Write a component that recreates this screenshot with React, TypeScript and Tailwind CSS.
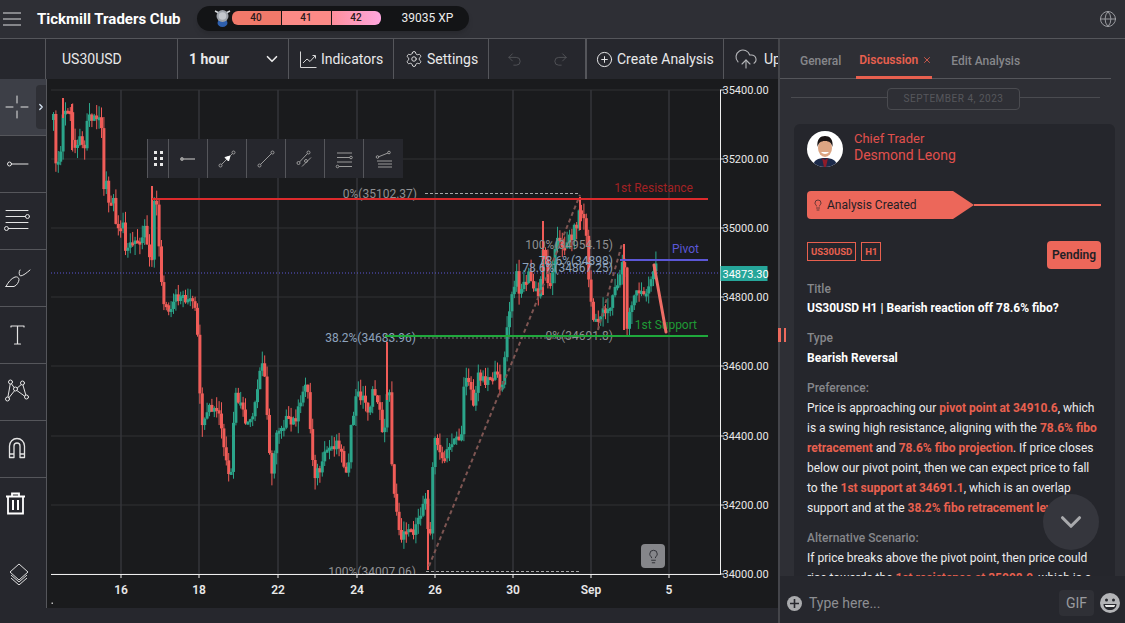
import { ChevronDown, ChevronRight, CirclePlus, CloudUpload, Globe, Lightbulb, Redo2, Settings, Undo2, X } from 'lucide-react';

// price path in page pixels: [x, close y]
const PATH: [number, number][] = [
  [52, 120], [53, 138], [55, 167], [58, 167], [60, 140], [62, 110], [65, 112], [68, 107], [70, 130], [72, 150], [75, 145], [78, 128], [80, 150],
  [83, 145], [85, 118], [87, 115], [92, 116], [97, 118], [100, 125], [102, 190], [105, 178], [108, 213], [112, 200], [115, 230], [118, 237],
  [122, 222], [123, 245], [128, 245], [133, 245], [140, 235], [143, 225], [147, 250], [150, 268], [152, 200], [155, 205], [158, 250], [162, 307],
  [165, 305], [168, 320], [173, 300], [180, 295], [187, 300], [193, 305], [197, 350], [198, 393], [200, 420], [203, 425], [208, 410], [217, 412],
  [220, 430], [227, 480], [230, 475], [233, 395], [238, 402], [243, 420], [250, 425], [255, 400], [258, 372], [262, 362], [265, 400], [270, 482],
  [275, 430], [280, 425], [285, 420], [290, 425], [295, 415], [300, 405], [303, 380], [305, 380], [307, 400], [310, 447], [313, 473], [320, 470],
  [325, 450], [330, 447], [337, 440], [342, 463], [347, 470], [350, 425], [355, 395], [360, 395], [367, 410], [372, 392], [377, 400], [380, 430],
  [385, 420], [387, 346], [389, 440], [392, 485], [397, 520], [398, 545], [403, 525], [410, 530], [415, 530], [420, 510], [425, 490], [428, 562],
  [430, 490], [433, 440], [437, 440], [440, 465], [447, 450], [453, 435], [460, 440], [463, 370], [468, 380], [473, 410], [477, 372], [483, 380],
  [490, 375], [497, 380], [500, 390], [503, 360], [505, 337], [508, 310], [515, 275], [518, 290], [522, 285], [527, 275], [533, 290], [538, 298],
  [543, 225], [545, 290], [550, 275], [555, 240], [563, 245], [570, 235], [575, 225], [578, 210], [582, 215], [585, 240], [588, 290], [592, 320],
  [595, 325], [600, 310], [608, 308], [613, 290], [618, 280], [623, 250], [624, 330], [627, 330], [628, 310], [633, 295], [638, 295], [643, 290],
  [648, 285], [652, 268], [655, 265],
];

const noise = (n: number) => {
  const v = Math.sin(n * 12.9898) * 43758.5453;
  return v - Math.floor(v);
};

function closeAt(x: number) {
  for (let i = 1; i < PATH.length; i++) {
    const [x0, y0] = PATH[i - 1];
    const [x1, y1] = PATH[i];
    if (x <= x1) return y0 + ((y1 - y0) * (x - x0)) / (x1 - x0);
  }
  return PATH[PATH.length - 1][1];
}

const CANDLES = (() => {
  const out: { x: number; top: number; bottom: number; wickTop: number; wickBottom: number; up: boolean }[] = [];
  let prev = PATH[0][1];
  let i = 0;
  for (let x = 52; x <= 655; x += 2.4) {
    const close = closeAt(x) + (noise(i) - 0.5) * 12;
    const top = Math.min(prev, close);
    const bottom = Math.max(prev, close);
    out.push({
      x,
      top,
      bottom: Math.max(bottom, top + 3),
      wickTop: top - noise(i + 300) * 12,
      wickBottom: bottom + noise(i + 700) * 12,
      up: close < prev,
    });
    prev = close;
    i++;
  }
  return out;
})();

const SPIKES = [
  [387, 342, 400], [543, 221, 295], [428, 490, 570], [624, 244, 330], [152, 186, 260], [580, 197, 230], [63, 98, 118], [72, 104, 150],
];

const PRICES = [
  ['35400.00', 90], ['35200.00', 159], ['35000.00', 228], ['34800.00', 297], ['34600.00', 366], ['34400.00', 436], ['34200.00', 505], ['34000.00', 574],
] as const;
const DATES = [['16', 121], ['18', 199], ['22', 278], ['24', 357], ['26', 435], ['30', 513], ['Sep', 591], ['5', 669]] as const;

function Chart() {
  return (
    <svg viewBox="47 79 731 529" className="block w-[731px] h-[529px]" style={{ fontFamily: 'Roboto, sans-serif' }}>
      <defs><clipPath id="plot"><rect x="47" y="79" width="673" height="495" /></clipPath></defs>
      {PRICES.map(([, y]) => <line key={y} x1="51" x2="720" y1={y} y2={y} stroke="#2a2b2d" strokeWidth="1.5" />)}
      {DATES.map(([, x]) => <line key={x} x1={x} x2={x} y1="90" y2="574" stroke="#35363a" strokeWidth="1.5" />)}

      <line x1="51" x2="720" y1="273" y2="273" stroke="#5b57d6" strokeDasharray="1 2" />

      {CANDLES.map((c, i) => {
        const color = c.up ? '#2ba58a' : '#f05c58';
        return (
          <g key={i}>
            <line x1={c.x + 1.5} x2={c.x + 1.5} y1={c.wickTop} y2={c.wickBottom} stroke={color} strokeWidth="1" />
            <rect x={c.x} y={c.top} width="3" height={c.bottom - c.top} fill={color} />
          </g>
        );
      })}
      {SPIKES.map(([x, a, b]) => <rect key={x} x={x - 1} y={a} width="2" height={b - a} fill="#f05c58" />)}

      {/* fibo drawings */}
      <line x1="429" y1="566" x2="580" y2="195" stroke="#7d5552" strokeWidth="2" strokeDasharray="4 3" />
      <line x1="598" y1="330" x2="622" y2="244" stroke="#7d5552" strokeWidth="2" strokeDasharray="4 3" />
      <line x1="425" x2="580" y1="193.5" y2="193.5" stroke="#a8a8a8" strokeDasharray="3 2" />
      <line x1="426" x2="580" y1="571.5" y2="571.5" stroke="#a8a8a8" strokeDasharray="3 2" />
      <line x1="420" x2="580" y1="338" y2="338" stroke="#777" strokeDasharray="2 2" />
      <g fontSize="12" fill="#8f9092" clipPath="url(#plot)">
        <text x="417" y="197.5" textAnchor="end">0%(35102.37)</text>
        <text x="416" y="576" textAnchor="end">100%(34007.06)</text>
        <text x="613" y="248.5" textAnchor="end">100%(34954.15)</text>
        <text x="613" y="339.5" textAnchor="end">0%(34691.8)</text>
      </g>
      <g fontSize="12" fill="#8ea3bd">
        <text x="416" y="342" textAnchor="end">38.2%(34683.96)</text>
        <text x="613" y="265" textAnchor="end">78.6%(34898)</text>
        <text x="613" y="271.5" textAnchor="end">78.6%(34867.25)</text>
      </g>

      {/* levels */}
      <line x1="152" x2="708" y1="199" y2="199" stroke="#dc2a2c" strokeWidth="2" />
      <line x1="620" x2="708" y1="260" y2="260" stroke="#5b57d6" strokeWidth="2" />
      <line x1="385" x2="708" y1="336" y2="336" stroke="#1fa83c" strokeWidth="2" />
      <text x="693" y="192" textAnchor="end" fontSize="12" fill="#a32224">1st Resistance</text>
      <text x="699" y="253" textAnchor="end" fontSize="12" fill="#5b57d6">Pivot</text>
      <text x="697" y="329" textAnchor="end" fontSize="12" fill="#1f9a36">1st Support</text>
      <polyline points="654,265 666,332" fill="none" stroke="#ee6d66" strokeWidth="3" strokeLinecap="round" />

      {/* axes */}
      <line x1="720.5" x2="720.5" y1="90" y2="574.5" stroke="#eee" />
      <line x1="51" x2="721" y1="574.5" y2="574.5" stroke="#eee" />
      {PRICES.map(([label, y]) => (
        <g key={label}>
          <line x1="720" x2="724" y1={y} y2={y} stroke="#eee" />
          <text x="722" dx="0.5" y={y + 4} fontSize="11" fill="#e8e8e8">{label}</text>
        </g>
      ))}
      <line x1="720" x2="724" y1="273" y2="273" stroke="#eee" />
      <rect x="720.5" y="266" width="47" height="15" fill="#26a69a" />
      <text x="722.500" y="277.5" fontSize="11" fill="#fff">34873.30</text>
      {DATES.map(([label, x]) => (
        <g key={label}>
          <line x1={x} x2={x} y1="574" y2="578" stroke="#eee" />
          <text x={x} y="594" textAnchor="middle" fontSize="12" fontWeight="600" fill="#e8e8e8">{label}</text>
        </g>
      ))}
      <rect x="51.5" y="602.5" width="1.5" height="1.5" fill="#bbb" />
    </svg>
  );
}

function RailIcon({ children }: { children: React.ReactNode }) {
  return (
    <svg width="34" height="34" viewBox="0 0 34 34" fill="none" stroke="#e4e4e4" strokeWidth="1" strokeLinecap="round" strokeLinejoin="round">
      {children}
    </svg>
  );
}

const RAIL = [
  <RailIcon key="cross"><path d="M6 17h7M21 17h7M17 6v7M17 21v7" /></RailIcon>,
  <RailIcon key="ray"><circle cx="9.5" cy="17" r="2" /><path d="M11.5 17H28" /></RailIcon>,
  <RailIcon key="fib"><path d="M6 6.500h22M6 12.500h19.500M6 18.500h22M8.500 24.500h19.500" /><circle cx="27.500" cy="12.500" r="2" /><circle cx="6.500" cy="24.500" r="2" /></RailIcon>,
  <RailIcon key="brush"><path d="M6 25.500h8c3-1 5-5 5-7 0-2-2-3-4-2.500-4 1.500-7 5.500-9 9.500zM20 9c-1.500 2-1 5 .5 6 3-.5 6-3 9.500-6" /></RailIcon>,
  <RailIcon key="text"><path d="M11 9V8h13v1M17.500 8v18M14.500 26h6" strokeWidth="1.200" /></RailIcon>,
  <RailIcon key="nodes"><path d="M10.500 7.500l-3 17M10.500 7.500l5 7M22.500 8.500l-7 6M15.500 14.500l-8 10M15.500 14.500l11 8M22.500 8.500l4 14" /><g fill="#26272d"><circle cx="10.500" cy="7" r="2" /><circle cx="22.500" cy="8" r="2" /><circle cx="15.500" cy="14" r="2" /><circle cx="7.500" cy="24" r="2" /><circle cx="26.500" cy="22" r="2" /></g></RailIcon>,
  <RailIcon key="magnet"><path d="M9.500 25.500V14a7.500 7.500 0 0115 0v11.500h-4.500V14a3 3 0 00-6 0v11.500zM9.500 22h4.500M20 22h4.500" strokeWidth="1.300" /></RailIcon>,
];

function ToolIcon({ children }: { children: React.ReactNode }) {
  return (
    <svg width="22" height="22" viewBox="0 0 22 22" fill="none" stroke="#9a9a9a" strokeWidth="1">
      {children}
    </svg>
  );
}

const DRAW_TOOLS = [
  <ToolIcon key="a"><circle cx="5" cy="11" r="1.500" fill="#9a9a9a" /><path d="M6 11h12" strokeWidth="1.500" /></ToolIcon>,
  <ToolIcon key="b"><circle cx="4.500" cy="17.500" r="1.500" /><circle cx="17.500" cy="4.500" r="1.500" /><path d="M5.500 16.500l11-11" /><path d="M9 9.500l5-1.500-1.500 5z" fill="#fff" stroke="#fff" /></ToolIcon>,
  <ToolIcon key="c"><circle cx="4.500" cy="17.500" r="1.500" /><circle cx="17.500" cy="4.500" r="1.500" /><path d="M5.500 16.500l11-11" /></ToolIcon>,
  <ToolIcon key="d"><circle cx="4.500" cy="15" r="1.500" /><circle cx="14.500" cy="4.500" r="1.500" /><path d="M5.500 14l8-8.500M8 18.500l9-9" /><circle cx="12" cy="13" r="1.500" /></ToolIcon>,
  <ToolIcon key="e"><path d="M4 5h15M4 9.500h13M4 14h15M6 18.500h13" /><circle cx="18" cy="9.500" r="1.300" /><circle cx="4.500" cy="18.500" r="1.300" /></ToolIcon>,
  <ToolIcon key="f"><path d="M5 9l10-4" /><circle cx="16" cy="4.500" r="1.300" /><circle cx="4.500" cy="9" r="1.300" /><path d="M4 13h15M5 16h14M5 19h14" strokeWidth="1.200" /></ToolIcon>,
];

function Divider() {
  return <div className="w-px self-stretch bg-[#55565b]" />;
}

function Hl({ children }: { children: React.ReactNode }) {
  return <span className="font-bold text-[#e8604f]">{children}</span>;
}

function Label({ className, children }: { className: string; children: React.ReactNode }) {
  return <p className={`${className} text-xs leading-4 font-medium text-[#86878b]`}>{children}</p>;
}

export default function App() {
  return (
    <div className="w-[1125px] h-[623px] overflow-hidden flex flex-col bg-[#2e2f35] text-white font-['Roboto',sans-serif]">
      {/* header */}
      <header className="h-[39px] shrink-0 flex items-center border-b border-[#55565b]">
        <div className="ml-[3px] w-[18px] flex flex-col gap-[4px]">
          <span className="h-[2px] bg-[#85868a]" />
          <span className="h-[2px] bg-[#85868a]" />
          <span className="h-[2px] bg-[#85868a]" />
        </div>
        <span className="ml-4 text-[15px] font-bold">Tickmill Traders Club</span>
        <div className="ml-4 w-[272px] h-[25px] -mt-[2px] rounded-full bg-[#131416] shadow-md flex items-center pl-4">
          <svg width="19" height="20" viewBox="0 0 19 20">
            <ellipse cx="9.500" cy="15" rx="5" ry="4" fill="#2d5fae" />
            <circle cx="9.500" cy="8" r="6" fill="#9ea3ab" />
            <circle cx="9.500" cy="8" r="3.800" fill="#c4c8ce" />
            <path d="M2 3l3 1.500M17 3l-3 1.500" stroke="#d5d8dc" strokeWidth="1.500" />
          </svg>
          <div className="h-[14px] w-[149px] flex gap-[1px] rounded-md overflow-hidden text-[10px] leading-[14px] font-medium text-[#2b1a1a] text-center">
            <span className="flex-1 bg-[#f1796a]">40</span>
            <span className="flex-1 bg-[#fb8a86]">41</span>
            <span className="flex-1 bg-[linear-gradient(90deg,#fe8f9c,#ffa7de)]">42</span>
          </div>
          <span className="ml-[21px] text-xs text-[#ececec]">39035 XP</span>
        </div>
        <Globe size={18} strokeWidth={1.2} className="ml-auto mr-[8px] text-[#a5a6aa]" />
      </header>

      <div className="flex-1 min-h-0 flex">
        {/* left side */}
        <div className="w-[778px] shrink-0 flex flex-col bg-[#26272d]">
          <div className="h-10 shrink-0 flex items-stretch text-sm text-[#e9e9ea]">
            <div className="w-[46px] border-r border-[#55565b]" />
            <div className="w-[131px] flex items-center pl-4">US30USD</div>
            <Divider />
            <div className="w-[110px] flex items-center pl-[11px] font-bold">
              1 hour
              <ChevronDown size={18} strokeWidth={2.2} className="ml-auto mr-[7px]" />
            </div>
            <Divider />
            <div className="w-[104px] flex items-center pl-[11px] gap-[4px]">
              <svg width="17" height="17" viewBox="0 0 17 17" fill="none" stroke="#d5d5d5" strokeWidth="1">
                <path d="M.5 .5v16h16" />
                <path d="M3 12l4-4 3 2.500 5-5.500M12.500 4.500H15.500V7.500" />
              </svg>
              Indicators
            </div>
            <Divider />
            <div className="w-[94px] flex items-center pl-[11px] gap-[4px]">
              <Settings size={18} strokeWidth={1.2} />
              Settings
            </div>
            <Divider />
            <div className="w-[96px] flex items-center pl-[17px] gap-[29px] text-[#56575c]">
              <Undo2 size={17} strokeWidth={1.2} />
              <Redo2 size={17} strokeWidth={1.2} />
            </div>
            <div className="w-[2px] bg-[#55565b]" />
            <div className="w-[136px] flex items-center pl-[9px] gap-[4px]">
              <CirclePlus size={17} strokeWidth={1.4} />
              Create Analysis
            </div>
            <Divider />
            <div className="flex-1 min-w-0 overflow-hidden flex items-center pl-[10px] gap-[6px]">
              <CloudUpload size={24} strokeWidth={1.1} className="shrink-0 text-[#b5b6b9]" />
              <span>Upload</span>
            </div>
          </div>

          <div className="flex h-[529px] shrink-0">
            {/* tool rail */}
            <aside className="relative w-[47px] shrink-0 border-r border-[#55565b] flex flex-col bg-[#26272d]">
              {RAIL.map((icon, i) => (
                <div key={i} className={`h-[57px] shrink-0 flex items-center justify-center pr-[12px] border-b border-[#55565b] ${i === 0 ? 'bg-[#3d3f47]' : ''}`}>
                  {icon}
                </div>
              ))}
              <div className="h-[50px] shrink-0 flex items-center pl-[5px]">
                <svg width="21" height="23" viewBox="0 0 21 23" fill="none" stroke="#fff" strokeWidth="1.800">
                  <path d="M1 4.500h19M7 4V1.500h7V4M3 4.500V21.500h15V4.500" />
                  <path d="M8 8v10M13 8v10" strokeWidth="2" />
                </svg>
              </div>
              <div className="flex items-center pl-[9px] pt-[35px]">
                <svg width="20" height="22" viewBox="0 0 20 22" fill="none" stroke="#dedede" strokeWidth="1">
                  <path d="M10 1l9 8-9 8-9-8zM2 12l8 7 8-7M2 15l8 7 8-7" />
                </svg>
              </div>
              <div className="absolute left-[36px] top-[6px] w-[10px] h-[44px] rounded-l bg-[#2e2f35] flex items-center justify-center">
                <ChevronRight size={10} strokeWidth={3} className="text-[#d8e6f5]" />
              </div>
            </aside>

            <div className="relative w-[731px] shrink-0 bg-[#1a1b1d]">
              <Chart />
              {/* floating drawing tools */}
              <div className="absolute left-[100px] top-[60px] h-[39px] flex bg-[#26272d]">
                <div className="w-[22px] grid grid-cols-2 content-center justify-center gap-x-[3px] gap-y-[3px] px-[6px] border-x border-[#55565b]">
                  {[0, 1, 2, 3, 4, 5].map(i => <span key={i} className="w-[3px] h-[3px] bg-[#e8e8e8]" />)}
                </div>
                {DRAW_TOOLS.map((icon, i) => (
                  <div key={i} className="w-[39px] flex items-center justify-center border-r border-[#55565b] last:border-r-0">{icon}</div>
                ))}
              </div>
              <div className="absolute left-[594px] top-[465px] w-6 h-6 rounded-sm bg-[#85868a] flex items-center justify-center">
                <Lightbulb size={15} strokeWidth={1.4} className="text-[#26272d]" />
              </div>
            </div>
          </div>
          <div className="flex-1" />
        </div>

        {/* right panel */}
        <div className="relative flex-1 min-w-0 flex flex-col border-l-2 border-[#44454a]">
          <div className="absolute -left-[2px] top-[289px] w-[8px] h-[14px] flex justify-between">
            <span className="w-[3px] bg-[#ee6a5d]" />
            <span className="w-[2px] bg-[#ee6a5d]" />
          </div>
          <div className="h-10 shrink-0 mr-[14px] flex items-stretch pl-[20px] border-b border-[#55565b] text-xs font-medium text-[#86878b]">
            <span className="mt-[14px]">General</span>
            <div className="ml-[15px] -mb-px h-10 pl-[3px] w-[76px] pt-[13px] flex items-start justify-between border-b-[3px] border-[#e8604f] text-[#e8604f] font-semibold">
              Discussion
              <X size={10} strokeWidth={2} className="mt-[3px]" />
            </div>
            <span className="ml-[19px] mt-[14px]">Edit Analysis</span>
          </div>

          <div className="h-[45px] shrink-0 flex items-start pt-[9px] pl-[11px] pr-[25px]">
            <div className="w-[96px] h-px mt-[9px] bg-[#4a4b50]" />
            <span className="h-[22px] w-[133px] rounded border border-[#4a4b50] text-center text-[10px] leading-5 tracking-wider text-[#56575c]">SEPTEMBER 4, 2023</span>
            <div className="flex-1 h-px mt-[9px] bg-[#4a4b50]" />
          </div>

          <div className="flex-1 min-h-0 ml-[14px] mr-[10px] overflow-hidden rounded-t-md bg-[#25262c] pl-[13px] pr-[14px] pt-[7px]">
            <div className="flex items-start">
              <svg width="36" height="36" viewBox="0 0 36 36" className="shrink-0">
                <defs><clipPath id="av"><circle cx="18" cy="18" r="18" /></clipPath></defs>
                <g clipPath="url(#av)">
                  <rect width="36" height="36" fill="#fff" />
                  <path d="M6 36c0-7 5-9 12-9s12 2 12 9z" fill="#1c2a4a" />
                  <path d="M15 27l3 2 3-2-2 9h-2z" fill="#8e1c2a" />
                  <ellipse cx="18" cy="17" rx="7" ry="9" fill="#dca583" />
                  <path d="M10.500 16c-1-8 3-11 7.500-11s8.500 3 7.500 11c-1-4-3-6-7.500-6s-6.500 2-7.500 6z" fill="#1a1414" />
                  <path d="M14 21c2 2.500 6 2.500 8 0z" fill="#fff" />
                </g>
              </svg>
              <div className="ml-[11px] -mt-px text-sm leading-[17px] text-[#e0504c]">
                <p className="text-[13px]">Chief Trader</p>
                <p>Desmond Leong</p>
              </div>
            </div>

            <div className="mt-[24px] flex items-center">
              <div className="w-[167px] h-[28px] shrink-0 rounded-l bg-[#ec675a] [clip-path:polygon(0_0,146px_0,167px_14px,146px_28px,0_28px)] flex items-center pl-[5px] gap-[3px] text-xs text-[#1f2025]">
                <Lightbulb size={12} strokeWidth={1.3} />
                Analysis Created
              </div>
              <div className="flex-1 h-[2px] bg-[#ec675a]" />
            </div>

            <div className="mt-[22px] h-[28px] flex items-start">
              <span className="mt-px h-[19px] px-[3px] border border-[#e8604f] text-[9.5px] leading-[17px] font-bold text-[#e8604f]">US30USD</span>
              <span className="ml-[5px] mt-px h-[19px] px-[3px] border border-[#e8604f] text-[9.5px] leading-[17px] font-bold text-[#e8604f]">H1</span>
              <span className="ml-auto h-[28px] w-[54px] rounded bg-[#ec675a] text-center text-xs leading-[28px] font-semibold text-[#1f2025]">Pending</span>
            </div>

            <Label className="mt-[12px]">Title</Label>
            <p className="mt-[3px] text-xs leading-4 font-bold">US30USD H1 | Bearish reaction off 78.6% fibo?</p>
            <Label className="mt-[14px]">Type</Label>
            <p className="mt-[4px] text-xs leading-4 font-bold">Bearish Reversal</p>
            <Label className="mt-[14px]">Preference:</Label>
            <p className="mt-[2px] pr-[4px] text-xs leading-5 text-[#ececec]">
              Price is approaching our <Hl>pivot point at 34910.6</Hl>, which is a swing high resistance, aligning with the <Hl>78.6% fibo retracement</Hl> and <Hl>78.6% fibo projection</Hl>. If price closes below our pivot point, then we can expect price to fall to the <Hl>1st support at 34691.1</Hl>, which is an overlap support and at the <Hl>38.2% fibo retracement level</Hl>.
            </p>
            <Label className="mt-[12px]">Alternative Scenario:</Label>
            <p className="mt-[2px] pr-[4px] text-xs leading-5 text-[#ececec]">
              If price breaks above the pivot point, then price could rise towards the <Hl>1st resistance at 35098.9</Hl>, which is a
            </p>
          </div>

          <div className="absolute left-[263px] top-[455px] w-[56px] h-[56px] rounded-full bg-[#35363d] flex items-center justify-center">
            <ChevronDown size={34} strokeWidth={2.2} className="text-[#a8a9ac]" />
          </div>

          <div className="h-[47px] shrink-0 flex items-center bg-[#26272d] pl-[7px] pt-[7px]">
            <div className="w-[15px] h-[15px] rounded-full bg-[#a9aaad] flex items-center justify-center">
              <svg width="9" height="9" viewBox="0 0 9 9" stroke="#26272d" strokeWidth="1.600"><path d="M4.500 0v9M0 4.500h9" /></svg>
            </div>
            <span className="ml-[7px] text-sm text-[#8d8e92]">Type here...</span>
            <span className="ml-auto w-[35px] h-[26px] rounded bg-[#2f3036] text-center text-sm leading-[26px] text-[#9a9b9f]">GIF</span>
            <svg width="20" height="20" viewBox="0 0 20 20" className="ml-[6px] mr-[5px]">
              <circle cx="10" cy="10" r="10" fill="#b3b4b7" />
              <circle cx="6.500" cy="7" r="1.500" fill="#26272d" />
              <circle cx="13.500" cy="7" r="1.500" fill="#26272d" />
              <path d="M3.500 11h13c0 4-3 6-6.500 6s-6.500-2-6.500-6z" fill="#26272d" />
              <path d="M5 12h10c0 1-.5 1.500-1 2H6c-.500-.500-1-1-1-2z" fill="#e8e8e8" />
            </svg>
          </div>
        </div>
      </div>
    </div>
  );
}
